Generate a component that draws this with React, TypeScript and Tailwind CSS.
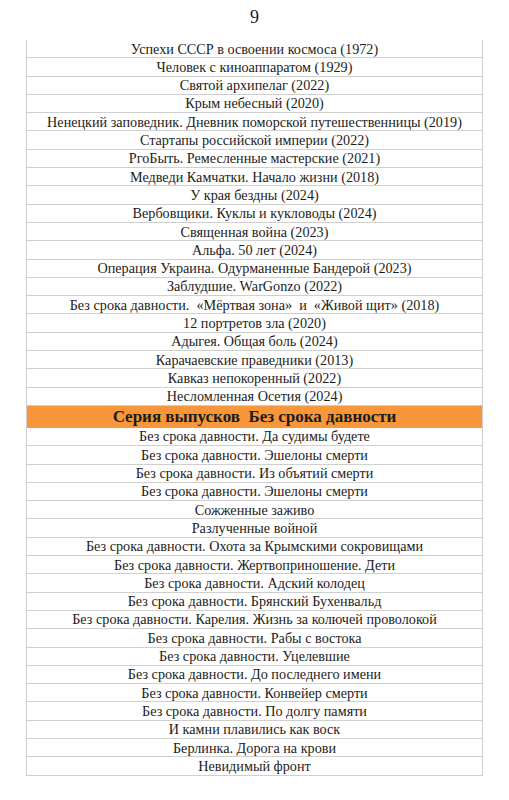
import React from "react";

const before = [
  "Успехи СССР в освоении космоса (1972)",
  "Человек с киноаппаратом (1929)",
  "Святой архипелаг (2022)",
  "Крым небесный (2020)",
  "Ненецкий заповедник. Дневник поморской путешественницы (2019)",
  "Стартапы российской империи (2022)",
  "PгоБыть. Ремесленные мастерские (2021)",
  "Медведи Камчатки. Начало жизни (2018)",
  "У края бездны (2024)",
  "Вербовщики. Куклы и кукловоды (2024)",
  "Священная война (2023)",
  "Альфа. 50 лет (2024)",
  "Операция Украина. Одурманенные Бандерой (2023)",
  "Заблудшие. WarGonzo (2022)",
  "Без срока давности.  «Мёртвая зона»  и  «Живой щит» (2018)",
  "12 портретов зла (2020)",
  "Адыгея. Общая боль (2024)",
  "Карачаевские праведники (2013)",
  "Кавказ непокоренный (2022)",
  "Несломленная Осетия (2024)",
];

const after = [
  "Без срока давности. Да судимы будете",
  "Без срока давности. Эшелоны смерти",
  "Без срока давности. Из объятий смерти",
  "Без срока давности. Эшелоны смерти",
  "Сожженные заживо",
  "Разлученные войной",
  "Без срока давности. Охота за Крымскими сокровищами",
  "Без срока давности. Жертвоприношение. Дети",
  "Без срока давности. Адский колодец",
  "Без срока давности. Брянский Бухенвальд",
  "Без срока давности. Карелия. Жизнь за колючей проволокой",
  "Без срока давности. Рабы с востока",
  "Без срока давности. Уцелевшие",
  "Без срока давности. До последнего имени",
  "Без срока давности. Конвейер смерти",
  "Без срока давности. По долгу памяти",
  "И камни плавились как воск",
  "Берлинка. Дорога на крови",
  "Невидимый фронт",
];

function Row({ text }: { text: string }) {
  return (
    <div className="h-[18.3px] border-b border-[#cfcfcf] flex items-center justify-center text-[14.2px] leading-none text-[#1c1c1c] whitespace-pre">
      {text}
    </div>
  );
}

export default function App() {
  return (
    <div className="w-[509px] h-[800px] bg-white flex flex-col font-['Liberation_Serif','Times_New_Roman',serif]">
      <div className="h-[40px] flex justify-center pt-[8px] text-[18px] leading-none text-[#1c1c1c]">
        <span>9</span>
      </div>
      <div className="ml-[26px] w-[457px] border-l border-r border-[#cfcfcf] flex flex-col">
        {before.map((t, i) => (
          <Row key={"b" + i} text={t} />
        ))}
        <div className="h-[22px] bg-[#f7963a] flex items-center justify-center text-[17px] font-bold leading-none text-[#1c1c1c] whitespace-pre">
          {"Серия выпусков  Без срока давности"}
        </div>
        {after.map((t, i) => (
          <Row key={"a" + i} text={t} />
        ))}
      </div>
    </div>
  );
}
